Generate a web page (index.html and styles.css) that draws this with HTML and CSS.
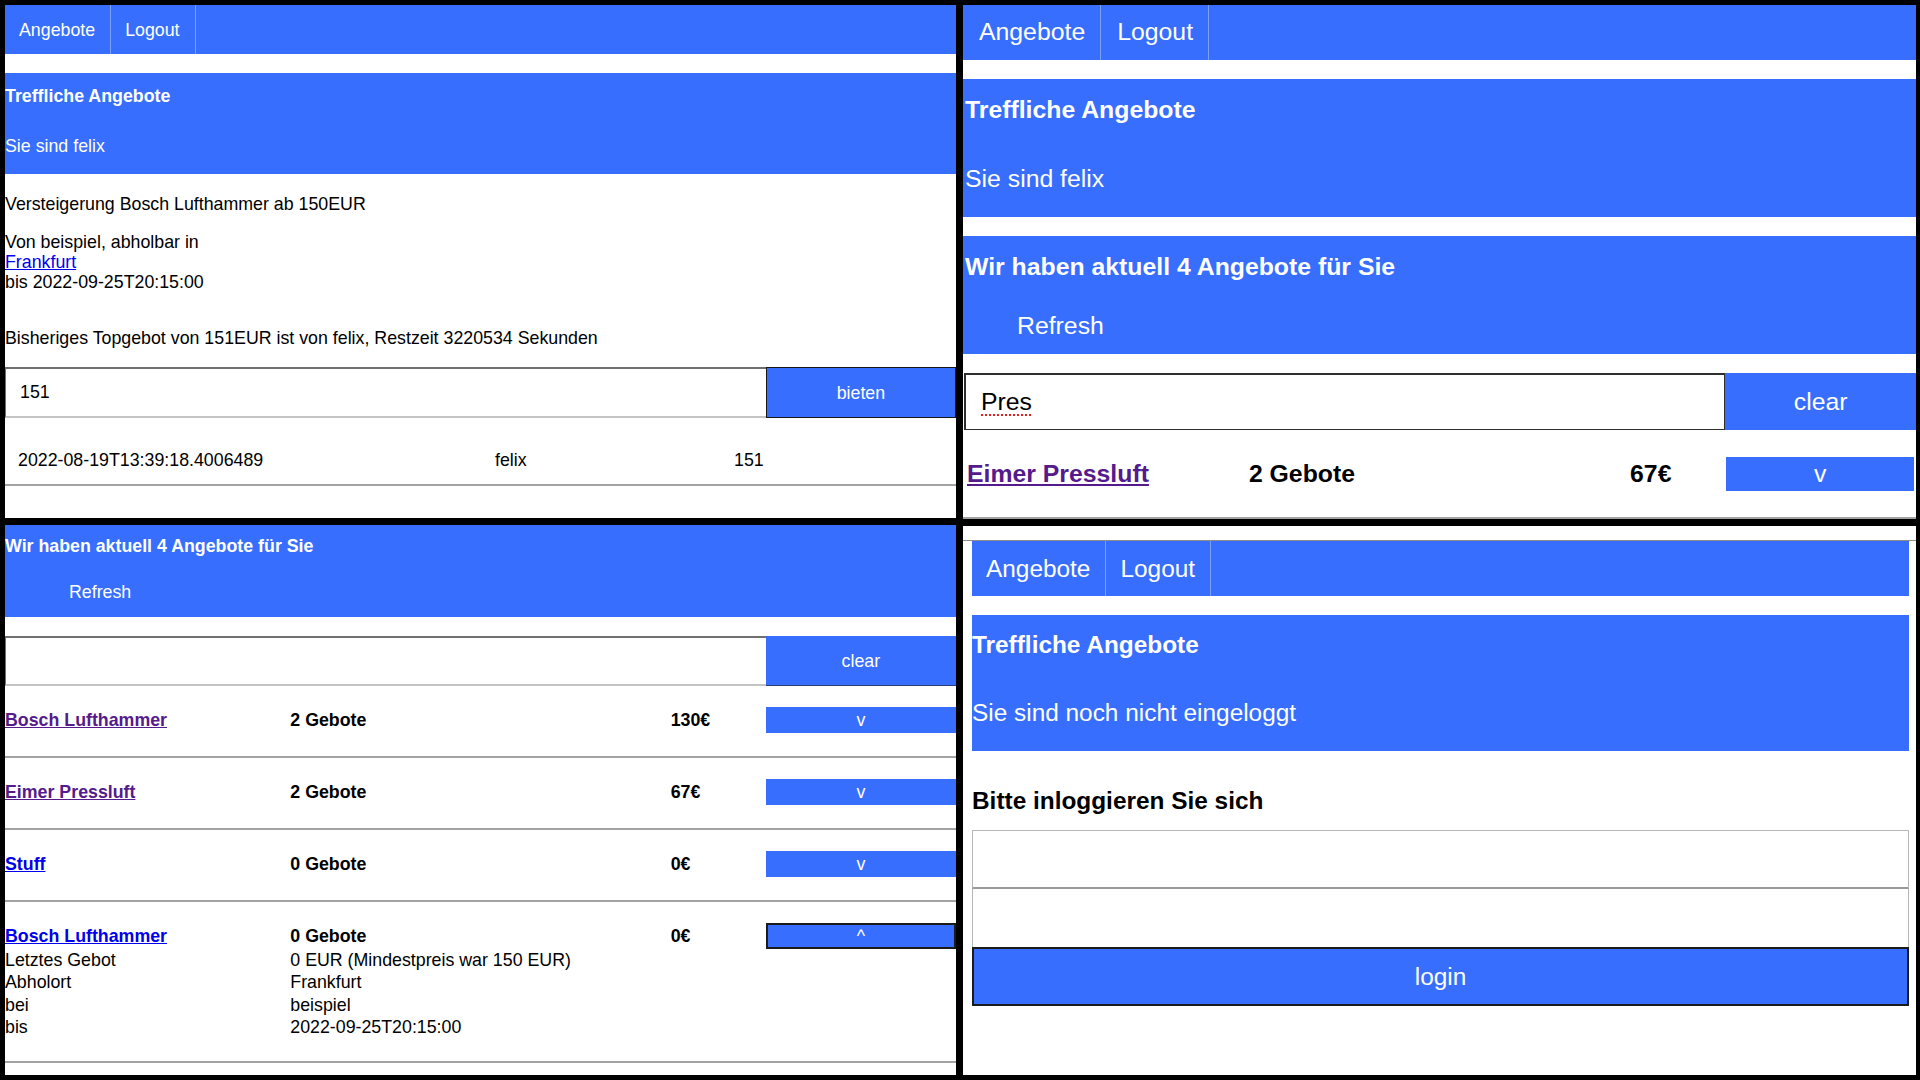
FILE: index.html
```html
<!DOCTYPE html>
<html lang="de">
<head>
<meta charset="utf-8">
<title>Treffliche Angebote</title>
<link rel="stylesheet" href="styles.css">
</head>
<body>
<main class="screen">
  <div class="col col-left">
    <section class="panel panel-tl size-s">
      <nav class="nav">
        <a class="nav-item" href="#">Angebote</a>
        <a class="nav-item" href="#">Logout</a>
      </nav>
      <header class="hero">
        <h1 class="hero-title">Treffliche Angebote</h1>
        <p class="hero-sub">Sie sind felix</p>
      </header>
      <div class="auction">
        <p class="auction-title">Versteigerung Bosch Lufthammer ab 150EUR</p>
        <p class="auction-meta">Von beispiel, abholbar in<br><a class="link unvisited" href="#">Frankfurt</a><br>bis 2022-09-25T20:15:00</p>
        <p class="auction-top">Bisheriges Topgebot von 151EUR ist von felix, Restzeit 3220534 Sekunden</p>
      </div>
      <form class="input-row bid-row">
        <input class="text-input inset-input" type="text" value="151">
        <button class="btn btn-outlined" type="button">bieten</button>
      </form>
      <div class="history-row">
        <span>2022-08-19T13:39:18.4006489</span>
        <span>felix</span>
        <span>151</span>
      </div>
    </section>

    <section class="panel panel-bl size-s">
      <div class="offers-head">
        <h2 class="offers-title">Wir haben aktuell 4 Angebote für Sie</h2>
        <button class="refresh" type="button">Refresh</button>
      </div>
      <div class="input-row search-row">
        <input class="text-input inset-input" type="text">
        <button class="btn clear-btn" type="button">clear</button>
      </div>
      <div class="offer">
        <a class="offer-name visited" href="#">Bosch Lufthammer</a>
        <span class="offer-bids">2 Gebote</span>
        <span class="offer-price">130€</span>
        <button class="btn toggle" type="button">v</button>
      </div>
      <div class="offer">
        <a class="offer-name visited" href="#">Eimer Pressluft</a>
        <span class="offer-bids">2 Gebote</span>
        <span class="offer-price">67€</span>
        <button class="btn toggle" type="button">v</button>
      </div>
      <div class="offer">
        <a class="offer-name unvisited" href="#">Stuff</a>
        <span class="offer-bids">0 Gebote</span>
        <span class="offer-price">0€</span>
        <button class="btn toggle" type="button">v</button>
      </div>
      <div class="offer offer-open">
        <a class="offer-name unvisited" href="#">Bosch Lufthammer</a>
        <span class="offer-bids">0 Gebote</span>
        <span class="offer-price">0€</span>
        <button class="btn toggle toggle-open" type="button">^</button>
        <span class="detail-label">Letztes Gebot</span>
        <span class="detail-value">0 EUR (Mindestpreis war 150 EUR)</span>
        <span class="detail-label">Abholort</span>
        <span class="detail-value">Frankfurt</span>
        <span class="detail-label">bei</span>
        <span class="detail-value">beispiel</span>
        <span class="detail-label">bis</span>
        <span class="detail-value">2022-09-25T20:15:00</span>
      </div>
    </section>
  </div>

  <div class="col col-right">
    <section class="panel panel-tr size-l">
      <nav class="nav">
        <a class="nav-item" href="#">Angebote</a>
        <a class="nav-item" href="#">Logout</a>
      </nav>
      <header class="hero">
        <h1 class="hero-title">Treffliche Angebote</h1>
        <p class="hero-sub">Sie sind felix</p>
      </header>
      <div class="offers-head">
        <h2 class="offers-title">Wir haben aktuell 4 Angebote für Sie</h2>
        <button class="refresh" type="button">Refresh</button>
      </div>
      <div class="input-row search-row">
        <div class="text-input focus-input" role="textbox"><span class="typo">Pres</span></div>
        <button class="btn" type="button">clear</button>
      </div>
      <div class="offer">
        <a class="offer-name visited" href="#">Eimer Pressluft</a>
        <span class="offer-bids">2 Gebote</span>
        <span class="offer-price">67€</span>
        <button class="btn toggle" type="button">v</button>
      </div>
    </section>

    <section class="panel panel-br size-l">
      <div class="page">
        <nav class="nav">
          <a class="nav-item" href="#">Angebote</a>
          <a class="nav-item" href="#">Logout</a>
        </nav>
        <header class="hero">
          <h1 class="hero-title">Treffliche Angebote</h1>
          <p class="hero-sub">Sie sind noch nicht eingeloggt</p>
        </header>
        <h2 class="login-title">Bitte inloggieren Sie sich</h2>
        <form class="login-form">
          <input class="login-input" type="text">
          <input class="login-input login-input-2" type="password">
          <button class="btn login-btn" type="button">login</button>
        </form>
      </div>
    </section>
  </div>
</main>
</body>
</html>
```

FILE: styles.css
```css
:root {
  --blue: #376efd;
  --rule: #a3a3a3;
}

* { box-sizing: border-box; }

html, body {
  margin: 0;
  padding: 0;
}

body {
  background: #000;
  font-family: "Liberation Sans", Arial, sans-serif;
  color: #000;
}

p, h1, h2 { margin: 0; }
h1, h2 { font-size: inherit; font-weight: bold; }

.screen {
  display: flex;
  gap: 7px;
  width: 1920px;
  height: 1080px;
  padding: 5px 4px 5px 5px;
}

.col {
  display: flex;
  flex-direction: column;
  gap: 7px;
  flex: none;
}
.col-left { width: 951px; }
.col-right { width: 953px; }

.panel {
  background: #fff;
  overflow: hidden;
  flex: none;
}
.panel-tl { height: 513px; }
.panel-bl { height: 550px; }
.panel-tr { height: 514px; }
.panel-br { height: 549px; padding-top: 14px; }

.size-s { font-size: 17.8px; line-height: 20px; }
.size-l { font-size: 24.8px; line-height: 28px; }
.panel-br.size-l { font-size: 24.4px; }

/* nav */
.nav {
  display: flex;
  background: var(--blue);
  height: 49px;
}
.size-l .nav { height: 55px; }
.nav-item {
  display: flex;
  align-items: center;
  padding: 0 15px 0 14px;
  color: #fff;
  text-decoration: none;
  border-right: 1px solid rgba(255, 255, 255, 0.35);
}
.panel-tr .nav-item { padding: 0 15px 2px 16px; }

/* hero */
.hero {
  background: var(--blue);
  color: #fff;
  margin-top: 19px;
}
.panel-tl .hero { padding: 13px 0 18px; }
.panel-tl .hero-sub { margin-top: 30px; }
.panel-tr .hero { padding: 17px 0 24px 2px; }
.panel-tr .hero-sub { margin-top: 41px; }
.panel-br .hero { padding: 16px 0 24px; }
.panel-br .hero-sub { margin-top: 40px; }

/* auction detail */
.auction-title { margin-top: 20px; }
.auction-meta { margin-top: 18px; }
.auction-top { margin-top: 36px; }

.link { text-decoration: underline; }
.visited { color: #551a8b; }
.unvisited { color: #0000ee; }

.input-row {
  display: grid;
  grid-template-columns: 80% 20%;
}
.bid-row { margin-top: 19px; height: 51px; }

.text-input {
  font: inherit;
  color: #000;
  background: #fff;
  border: 0;
  margin: 0;
  outline: none;
  min-width: 0;
  width: 100%;
  height: 100%;
}
.inset-input {
  border-top: 2px solid #6f6f6f;
  border-left: 1px solid #6f6f6f;
  border-bottom: 2px solid #c4c4c4;
  padding: 0 0 0 14px;
}
.focus-input {
  display: flex;
  align-items: center;
  border: 1px solid #2f2f2f;
  border-top-width: 2px;
  border-left-width: 2px;
  margin-left: 1px;
  width: calc(100% - 1px);
  padding-left: 15px;
}
.typo {
  text-decoration: underline dotted #e02020;
  text-decoration-thickness: 2px;
  text-underline-offset: 4px;
}

.btn {
  font: inherit;
  color: #fff;
  background: var(--blue);
  border: 0;
  margin: 0;
  padding: 0;
  cursor: pointer;
}
.btn-outlined { border: 1px solid #161616; }
.clear-btn { border-bottom: 1px solid #2b3f7a; }

.history-row {
  display: grid;
  grid-template-columns: 477px 239px 1fr;
  padding: 32px 0 14px 13px;
  border-bottom: 2px solid var(--rule);
}

/* offers */
.offers-head {
  background: var(--blue);
  color: #fff;
}
.panel-bl .offers-head { padding: 11px 0 15px; }
.panel-tr .offers-head { padding: 17px 0 14px 2px; margin-top: 19px; }
.refresh {
  display: block;
  background: none;
  border: 0;
  padding: 0;
  color: #fff;
  font: inherit;
  line-height: inherit;
}
.panel-bl .refresh { margin: 26px 0 0 64px; }
.panel-tr .refresh { margin: 31px 0 0 52px; }

.search-row { margin-top: 19px; }
.panel-bl .search-row { height: 50px; }
.panel-tr .search-row { height: 57px; }

.offer {
  display: grid;
  grid-template-columns: 30% 40% 10% 20%;
  align-items: center;
  border-bottom: 2px solid var(--rule);
}
.panel-bl .offer { padding: 21px 0 23px; }
.panel-tr .offer { padding: 27px 0 26px; }

.offer-name {
  font-weight: bold;
  text-decoration: underline;
}
.panel-tr .offer-name { padding-left: 4px; }
.offer-bids, .offer-price { font-weight: bold; }

.toggle { width: 100%; }
.panel-bl .toggle { height: 26px; }
.panel-tr .toggle { height: 34px; margin: 0 2px 0 1px; width: auto; }
.toggle-open { border: 2px solid #1b1b1b; }

.detail-label { grid-column: 1; line-height: 22.3px; }
.detail-value { grid-column: 2 / span 3; line-height: 22.3px; }

/* login */
.panel-br .page {
  border-top: 1px solid #8c8c8c;
  padding: 0 7px 0 9px;
}
.login-title { margin: 36px 0 15px; }
.login-form { display: flex; flex-direction: column; }
.login-input {
  font: inherit;
  height: 59px;
  margin: 0;
  border: 1px solid #b6b6b6;
  border-bottom: 2px solid #9a9a9a;
  background: #fff;
  outline: none;
}
.login-input-2 {
  height: 58px;
  border-top: 0;
  border-bottom: 0;
}
.login-btn {
  height: 59px;
  border: 2px solid #1a1a1a;
}
```
